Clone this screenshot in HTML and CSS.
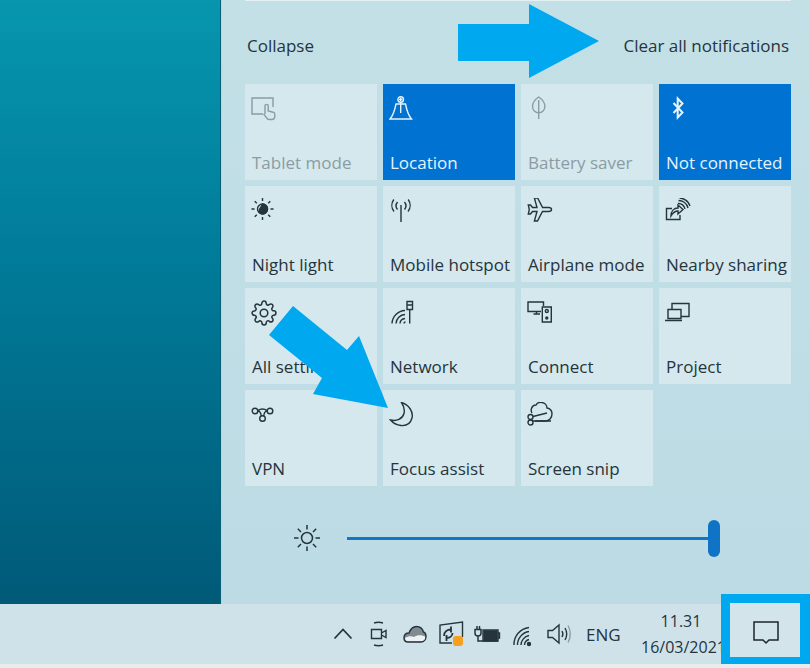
FILE: index.html
```html
<!DOCTYPE html>
<html lang="en">
<head>
    <meta charset="UTF-8">
    <meta name="viewport" content="width=device-width, initial-scale=1.0">
    <title>Action center</title>
    <link rel="stylesheet" href="styles.css">
</head>
<body>
    <div id="screen">
        <div class="main">
            <div class="desktop"></div>
            <div class="panel">
                <div class="notif-edge"></div>
                <div class="panel-head">
                    <span>Collapse</span>
                    <span>Clear all notifications</span>
                </div>

                <div class="tiles">
                    <div class="tile off">
                        <svg class="icon" viewBox="0 0 26 26"><path d="M12 18H1V2h21v9"/><path d="M14 18v-8a1.600 1.600 0 0 1 3.200 0v5l5 1.200c1 .3 1.600 1 1.600 2v2.300a3 3 0 0 1-3 3h-2.600a3 3 0 0 1-2.600-1.600L12.600 18"/></svg>
                        <span class="label">Tablet mode</span>
                    </div>
                    <div class="tile on">
                        <svg class="icon" viewBox="0 0 26 26"><circle cx="11.700" cy="3.500" r="2.800"/><path d="M11.700 1.800v3.400M10 3.500h3.400M11.700 6.300V17M7 8h9.500c1 5 2.500 11 6 15H1C4.500 19 6 13 7 8z"/></svg>
                        <span class="label">Location</span>
                    </div>
                    <div class="tile off">
                        <svg class="icon" viewBox="0 0 26 26"><path d="M11.700 1C8 3.500 5.500 7 5.500 10.500a6.200 6.200 0 0 0 12.400 0C17.900 7 15.400 3.500 11.700 1zM11.700 4v19"/></svg>
                        <span class="label">Battery saver</span>
                    </div>
                    <div class="tile on">
                        <svg class="icon bold" viewBox="0 0 26 26"><path d="M8.500 7l9 9.500-4.800 5V2.500l4.800 5-9 9.500"/></svg>
                        <span class="label">Not connected</span>
                    </div>

                    <div class="tile">
                        <svg class="icon" viewBox="0 0 26 26"><circle cx="11.500" cy="11" r="5"/><path class="solid" d="M11.500 6a5 5 0 0 1 0 10c-3-1-4-2.500-3-4.500 1-1.500 2-3.500 3-5.500z"/><path d="M11.500 0v3M11.500 19v3M.5 11h3M19.500 11h3M3.700 3.200l2.100 2.100M17.200 16.700l2.100 2.100M3.700 18.800l2.100-2.100M17.200 5.300l2.100-2.100"/></svg>
                        <span class="label">Night light</span>
                    </div>
                    <div class="tile">
                        <svg class="icon" viewBox="0 0 26 26"><path d="M12 7v17M8.500 4a6 6 0 0 0 0 7.500M15.500 4a6 6 0 0 1 0 7.500M4.800 1.500a10 10 0 0 0 .2 12M19.200 1.500a10 10 0 0 1-.2 12"/></svg>
                        <span class="label">Mobile hotspot</span>
                    </div>
                    <div class="tile">
                        <svg class="icon" viewBox="0 0 26 26"><path d="M24.500 11.500c0 1.200-1.300 2-3 2h-6l-5 9.500H7.400l2.600-9.500H5.500l-2 2.500H1.300l1-4.500-1-4.500h2.200l2 2.500H10L7.400 0h3.200l5 9.500h6c1.700 0 2.900.8 2.900 2z"/></svg>
                        <span class="label">Airplane mode</span>
                    </div>
                    <div class="tile">
                        <svg class="icon" viewBox="0 0 26 26"><path d="M7 10.500H1.500V21.500H15V17"/><path d="M6 18c0-5 3-8 7-8V7l5 4.500-5 4.500v-3c-3 0-5 1.500-7 5z"/><path d="M13 5.500a6.500 6.500 0 0 1 7 5.500M13.500 2.500A10 10 0 0 1 23 10M14.500 0A12 12 0 0 1 25 8"/></svg>
                        <span class="label">Nearby sharing</span>
                    </div>

                    <div class="tile">
                        <svg class="icon" viewBox="0 0 24 24"><circle cx="12" cy="12" r="3.500"/><path d="M19.400 15a1.650 1.650 0 0 0 .33 1.820l.06.06a2 2 0 0 1 0 2.830 2 2 0 0 1-2.830 0l-.06-.06a1.650 1.650 0 0 0-1.820-.33 1.650 1.650 0 0 0-1 1.510V21a2 2 0 0 1-2 2 2 2 0 0 1-2-2v-.09A1.650 1.650 0 0 0 9 19.400a1.650 1.650 0 0 0-1.820.33l-.06.06a2 2 0 0 1-2.830 0 2 2 0 0 1 0-2.830l.06-.06a1.650 1.650 0 0 0 .33-1.820 1.650 1.650 0 0 0-1.510-1H3a2 2 0 0 1-2-2 2 2 0 0 1 2-2h.09A1.650 1.650 0 0 0 4.600 9a1.650 1.650 0 0 0-.33-1.820l-.06-.06a2 2 0 0 1 0-2.830 2 2 0 0 1 2.830 0l.06.06a1.650 1.650 0 0 0 1.820.33H9a1.650 1.650 0 0 0 1-1.510V3a2 2 0 0 1 2-2 2 2 0 0 1 2 2v.09a1.650 1.650 0 0 0 1 1.510 1.650 1.650 0 0 0 1.820-.33l.06-.06a2 2 0 0 1 2.830 0 2 2 0 0 1 0 2.830l-.06.06a1.650 1.650 0 0 0-.33 1.820V9a1.650 1.650 0 0 0 1.510 1H21a2 2 0 0 1 2 2 2 2 0 0 1-2 2h-.09a1.650 1.650 0 0 0-1.510 1z"/></svg>
                        <span class="label">All settings</span>
                    </div>
                    <div class="tile">
                        <svg class="icon" viewBox="0 0 26 26"><path d="M3 23.500A13.500 13.500 0 0 1 16 10.500M7 23.500A9.500 9.500 0 0 1 16 14.500M11 23.500A5.500 5.500 0 0 1 16 18.500M15 23.500a1.500 1.500 0 0 1 1.500-1.500"/><path d="M18 1.500h5.500v8H18zM18 5h5.500M20.700 9.500v14"/></svg>
                        <span class="label">Network</span>
                    </div>
                    <div class="tile">
                        <svg class="icon" viewBox="0 0 26 26"><path d="M14 11.500H1V2h15.500v4M6.500 14H13M9.500 11.500V14"/><path d="M15.300 7h9v15h-9z"/><circle cx="19.800" cy="11" r="1.500"/><circle class="solid" cx="19.800" cy="18" r="1"/></svg>
                        <span class="label">Connect</span>
                    </div>
                    <div class="tile">
                        <svg class="icon" viewBox="0 0 26 26"><path d="M7 9V3.500h17v13h-8"/><path d="M3 9.500h13v9H3zM0 20.500h17"/></svg>
                        <span class="label">Project</span>
                    </div>

                    <div class="tile">
                        <svg class="icon" viewBox="0 0 26 26"><circle cx="4" cy="9" r="2.800"/><circle cx="19" cy="9" r="2.800"/><circle cx="11.500" cy="16.500" r="2.800"/><path d="M6.800 9c2 0 3 1 3.500 5M16.200 9c-2 0-3 1-3.500 5M6.800 8.500c3-2 6.400-2 9.400 0"/></svg>
                        <span class="label">VPN</span>
                    </div>
                    <div class="tile">
                        <svg class="icon" viewBox="0 0 26 26"><path d="M12.500.5c7.500 2 12 9.500 10.500 15.500-1.500 5.500-6 8-11 7.500-4.500-.5-8-2.500-10.500-5.500 6 1.500 12-1 13.500-6.500 1-4-.5-8-2.500-11z"/></svg>
                        <span class="label">Focus assist</span>
                    </div>
                    <div class="tile">
                        <svg class="icon" viewBox="0 0 26 26"><path d="M5 11C3 8 5 3 9 3c1-2 3-3 6-2.500 3 .5 5 3 5 5.500 3 .5 5 3 5 6 0 4-3 7-6.500 7H8"/><circle cx="3.500" cy="15" r="2.500"/><circle cx="3.500" cy="20.500" r="2.500"/><path d="M6 14.500L20 11M6 19h18"/></svg>
                        <span class="label">Screen snip</span>
                    </div>
                </div>

                <div class="brightness">
                    <svg class="sun" viewBox="0 0 26 26"><circle cx="13" cy="13" r="5.500"/><path d="M13 0v4.500M13 21.500V26M0 13h4.500M21.500 13H26M3.800 3.800L7 7M19 19l3.200 3.200M3.800 22.200L7 19M19 7l3.200-3.200"/></svg>
                    <div class="track"><div class="thumb"></div></div>
                </div>
            </div>
        </div>

        <div class="taskbar">
            <div class="tray">
                <svg class="tray-icon" viewBox="0 0 24 24"><path d="M3.500 16.500L12 7.500l8.500 9" stroke-width="1.800"/></svg>
                <svg class="tray-icon" viewBox="0 0 24 24"><path d="M4.500 7.500h10v9h-10zM14.500 11l4.500-2.500v7L14.500 13M7 1c3-1 6-1 9 0M7 23c3 1 6 1 9 0"/></svg>
                <svg class="tray-icon" viewBox="0 0 24 24"><path class="cloud-top" d="M1 16c0-3 2-5 5-5C7.500 7 10.500 4.500 13.500 4.500c3.500 0 6 2 7 5.500 1.500.5 2.500 2.500 2.500 4.500 0 3-2 5.500-5 5.500H5c-2.500 0-4-1.500-4-4z"/><path class="cloud-low" d="M2 16c3-2 7-2 9-1 3-2.500 8-2.500 12 0 0 2.500-2 4.500-5 4.500H5c-1.500 0-3-1.500-3-3.500z"/><path d="M1 16c0-3 2-5 5-5C7.500 7 10.500 4.500 13.500 4.500c3.500 0 6 2 7 5.500 1.500.5 2.500 2.500 2.500 4.500 0 3-2 5.500-5 5.500H5c-2.500 0-4-1.500-4-4z"/></svg>
                <div class="tray-sync">
                    <svg class="tray-icon" viewBox="0 0 24 24"><path d="M13 21H1V3L23.500 0v15"/><path d="M5 14c0-4 3-6.500 7-6.500M12 4.500v6M13.500 11c0 3-2.500 5-6 5M7.500 13v6" stroke-width="1.800"/></svg>
                    <span class="badge"></span>
                </div>
                <svg class="tray-icon" viewBox="0 0 24 24"><path class="solid" d="M9 9h13v10H9z"/><path d="M8 8h15v11H8zM23 11h1.500v5H23"/><path d="M0 7.500h6v3.500a3 3 0 0 1-6 0zM2 7.500V4M4.500 7.500V4M3 14v5h5" stroke-width="1.500"/></svg>
                <svg class="tray-icon" viewBox="0 0 24 24"><path d="M3 23A17 17 0 0 1 18 5.500M6.500 23A13.500 13.500 0 0 1 18 9.500M10 23A10 10 0 0 1 18 13.500M13.500 23a6 6 0 0 1 4.500-5.500"/><circle class="solid" cx="18" cy="22" r="1.500"/></svg>
                <svg class="tray-icon" viewBox="0 0 24 24"><path d="M1 8.500h4.500L12 3v18l-6.500-5.500H1z"/><path d="M15 9c1.200 2 1.200 4 0 6M18 6c2 3.500 2 8.500 0 12" /><path class="faint" d="M21 3.500c3 5 3 12 0 17"/></svg>
            </div>
            <span class="lang">ENG</span>
            <div class="clock">
                <div>11.31</div>
                <div>16/03/2021</div>
            </div>
            <div class="action-btn">
                <svg class="action-icon" viewBox="0 0 26 26"><path d="M1 2h24v18H16l-3 3-3-3H1z"/></svg>
            </div>
        </div>
        <div class="under-strip"></div>

        <svg class="arrows" viewBox="0 0 810 668">
            <polygon points="458,24 529,24 529,4 599,41 529,78 529,61 458,61"/>
            <polygon points="293,306 347,350 359,336 388,408 313,394 322,378 269,335"/>
        </svg>
    </div>
</body>
</html>
```

FILE: styles.css
```css
* {
    box-sizing: border-box;
}

body {
    margin: 0;
    font-family: 'Open Sans', sans-serif;
    color: #26343c;
    overflow: hidden;
}

#screen {
    position: relative;
    width: 810px;
    height: 668px;
    display: flex;
    flex-direction: column;
    overflow: hidden;
}

.main {
    flex-grow: 1;
    display: flex;
    min-height: 0;
}

.desktop {
    width: 221px;
    flex-shrink: 0;
    background: linear-gradient(180deg, #0796ae 0%, #007a98 45%, #005a78 100%);
    border-right: 1px solid #075f78;
}

.panel {
    flex-grow: 1;
    padding: 0 19px 0 23px;
    background: linear-gradient(180deg, #c3e0e7 0%, #bcdbe4 100%);
    border-left: 1px solid #a8dce8;
}

.notif-edge {
    height: 1px;
    background-color: #e4f0f3;
}

.panel-head {
    height: 83px;
    padding: 5px 2px 0;
    display: flex;
    justify-content: space-between;
    align-items: center;
    font-size: 17px;
}

.tiles {
    display: grid;
    grid-template-columns: repeat(4, 132px);
    grid-auto-rows: 96px;
    gap: 6px;
}

.tile {
    display: flex;
    flex-direction: column;
    justify-content: space-between;
    padding: 12px 6px 7px;
    background-color: #d4e8ee;
    color: #26343c;
    overflow: hidden;
}

.tile.off {
    color: #8b9ca3;
}

.tile.on {
    background-color: #0072d2;
    color: #e6f3fa;
}

.label {
    padding-left: 1px;
    font-size: 17px;
    line-height: 20px;
    white-space: nowrap;
}

.icon {
    display: block;
    width: 26px;
    height: 26px;
    fill: none;
    stroke: currentColor;
    stroke-width: 1.400;
}

.icon.bold {
    stroke-width: 2;
}

.solid {
    fill: currentColor;
}

.brightness {
    display: flex;
    align-items: center;
    height: 36px;
    margin-top: 34px;
    padding-left: 49px;
}

.sun {
    width: 26px;
    height: 26px;
    fill: none;
    stroke: #26343c;
    stroke-width: 1.500;
}

.track {
    position: relative;
    width: 368px;
    height: 3px;
    margin-left: 27px;
    background-color: #1076c8;
}

.thumb {
    position: absolute;
    top: -17px;
    right: -5px;
    width: 12px;
    height: 37px;
    border-radius: 6px;
    background-color: #0f74c6;
}

.taskbar {
    height: 60px;
    flex-shrink: 0;
    display: flex;
    justify-content: flex-end;
    align-items: center;
    background-color: #cfe2e9;
    font-size: 17px;
}

.tray {
    display: flex;
    align-items: center;
}

.tray-icon {
    display: block;
    width: 24px;
    height: 24px;
    margin: 0 6px;
    fill: none;
    stroke: #26343c;
    stroke-width: 1.400;
    color: #26343c;
    overflow: visible;
}

.cloud-low {
    fill: #eef2f3;
    stroke: none;
}

.cloud-top {
    fill: #7f8c91;
    stroke: none;
}

.faint {
    stroke: #8b9ca3;
}

.tray-sync {
    position: relative;
}

.badge {
    position: absolute;
    left: 20px;
    top: 14px;
    width: 10px;
    height: 10px;
    border-radius: 3px;
    background-color: #f5a01e;
}

.lang {
    margin-left: 9px;
    width: 34px;
}

.clock {
    width: 80px;
    margin-left: 21px;
    font-size: 16px;
    text-align: center;
    line-height: 26px;
    white-space: nowrap;
}

.action-btn {
    position: relative;
    width: 89px;
    height: 70px;
    margin-top: -10px;
    display: flex;
    justify-content: center;
    align-items: center;
    background-color: #d3e5eb;
    border: 9px solid #00a8f0;
    border-right-width: 10px;
    border-bottom-width: 7px;
}

.action-icon {
    width: 26px;
    height: 26px;
    margin: 6px 0 0 2px;
    fill: none;
    stroke: #1c262c;
    stroke-width: 1.500;
}

.under-strip {
    height: 4px;
    flex-shrink: 0;
    background-color: #e9ebec;
}

.arrows {
    position: absolute;
    top: 0;
    left: 0;
    width: 810px;
    height: 668px;
    fill: #00a8f0;
    pointer-events: none;
}
```
